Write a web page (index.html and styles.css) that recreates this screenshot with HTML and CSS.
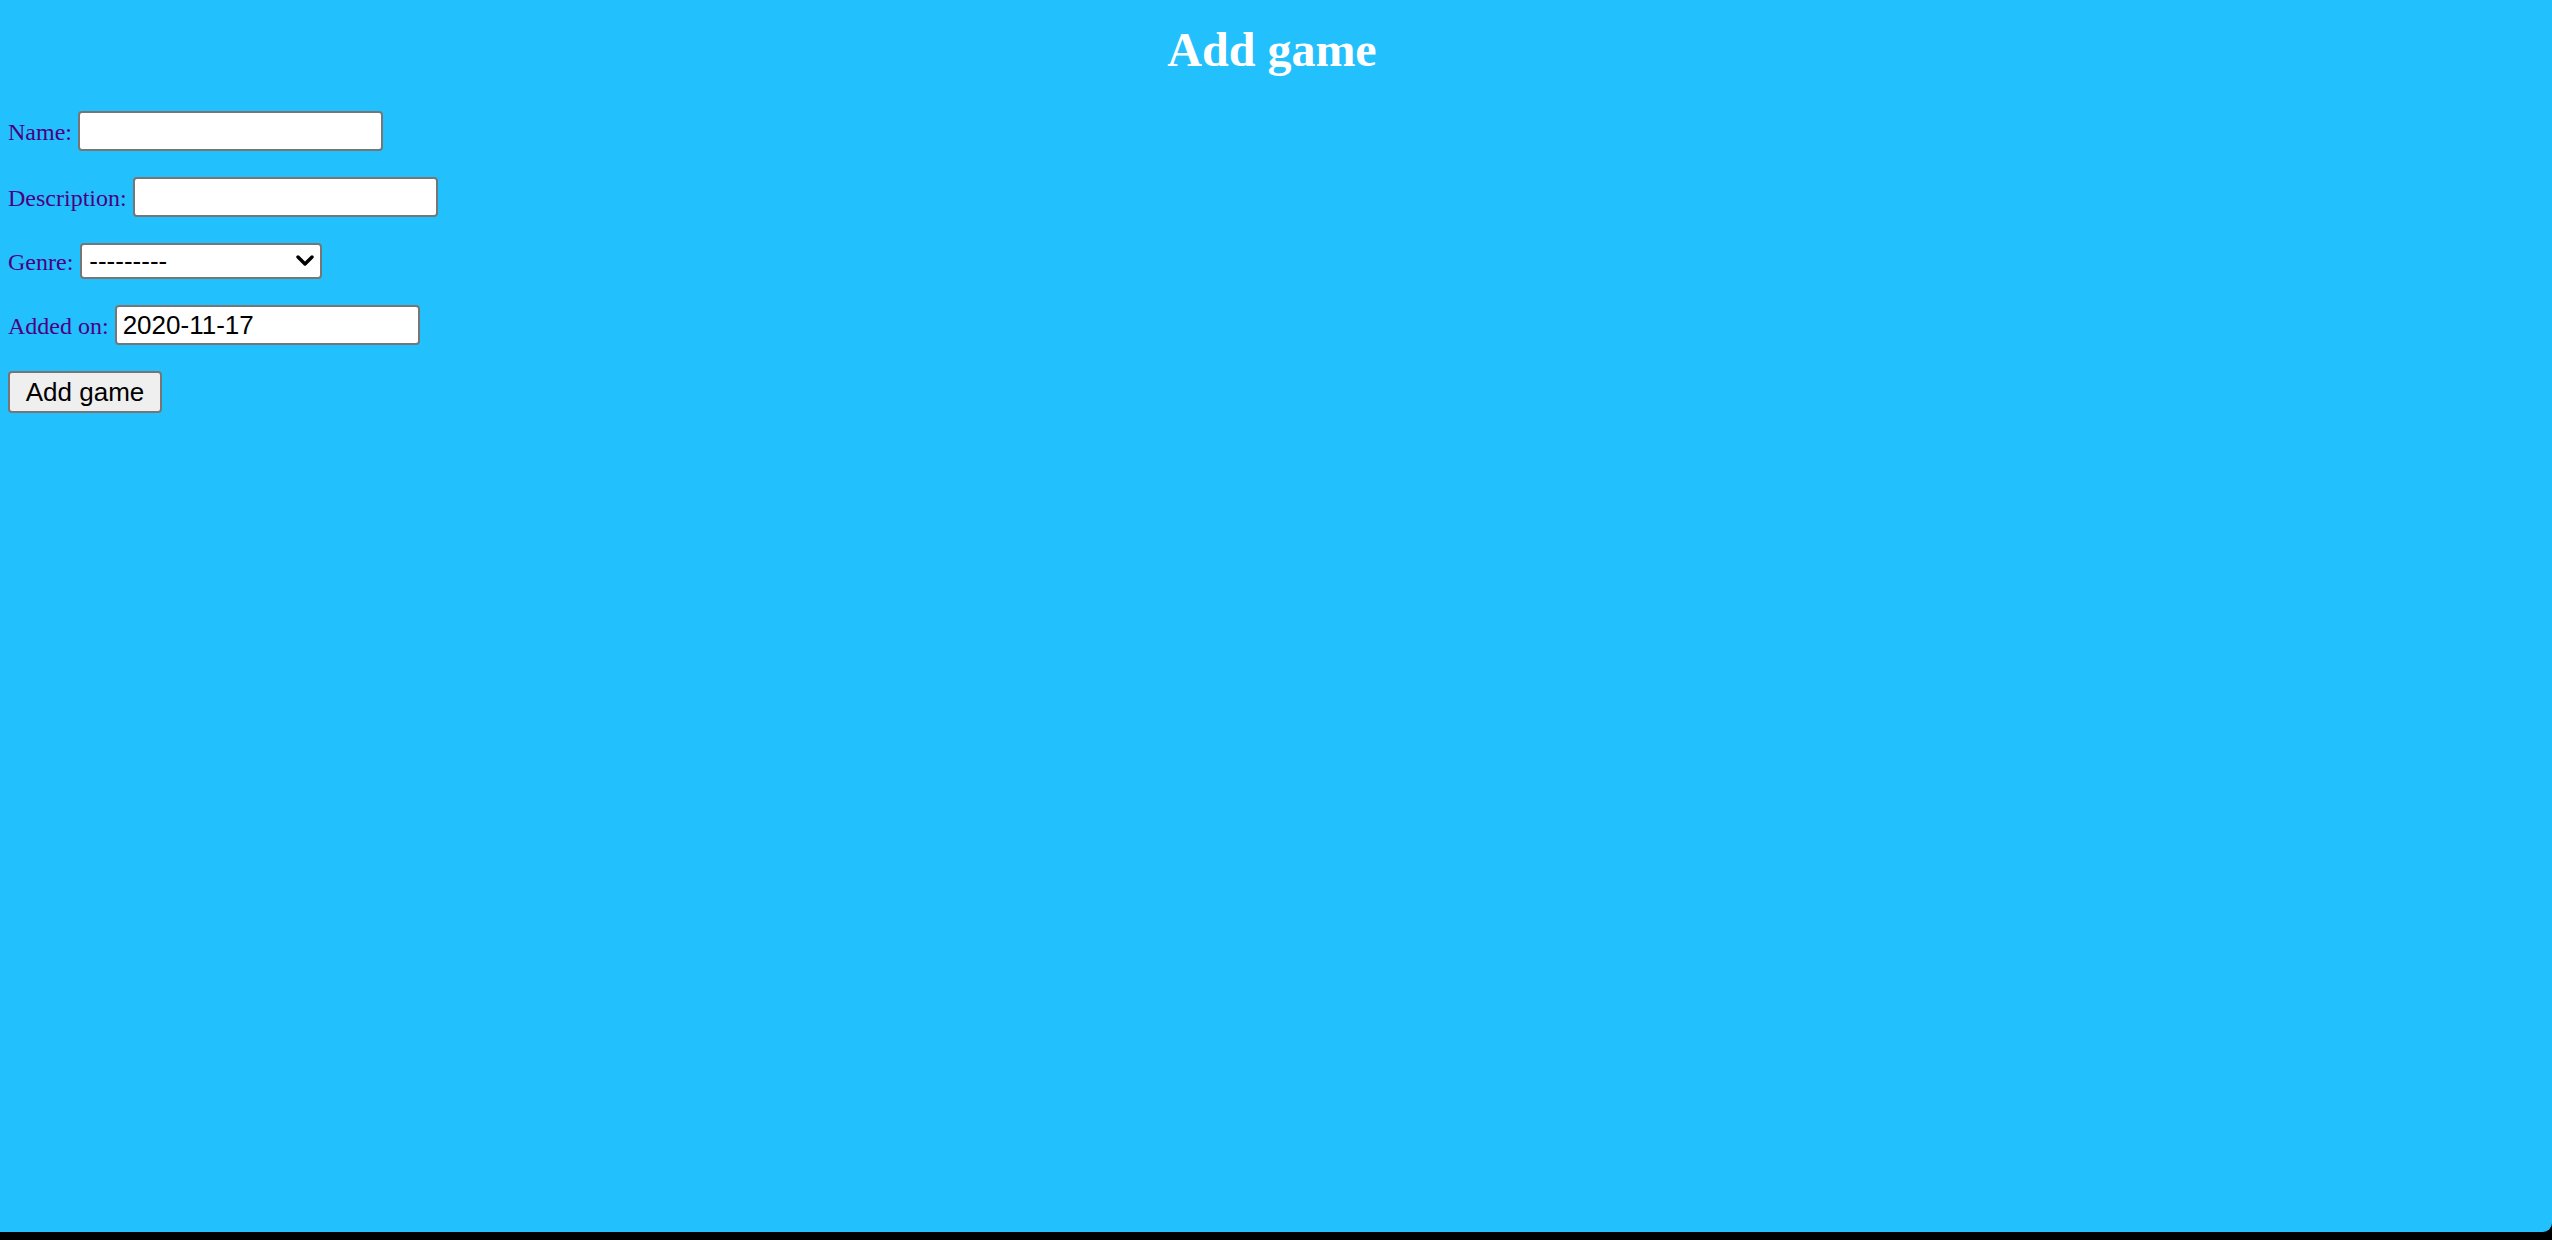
FILE: index.html
```html
<!DOCTYPE html>
<html lang="en">
<head>
<meta charset="utf-8">
<title>Add game</title>
<link rel="stylesheet" href="styles.css">
</head>
<body>
<div class="window">
  <h1 class="title">Add game</h1>
  <form class="form">
    <div class="row"><label class="label" for="name">Name:</label> <input class="field" id="name" type="text"></div>
    <div class="row"><label class="label" for="desc">Description:</label> <input class="field" id="desc" type="text"></div>
    <div class="row"><label class="label" for="genre">Genre:</label> <span class="select-wrap"><select class="select" id="genre"><option>---------</option></select><svg class="chevron" width="18" height="12" viewBox="0 0 18 12"><path d="M2 2 L9 9 L16 2" fill="none" stroke="#000" stroke-width="3.4" stroke-linecap="round" stroke-linejoin="round"/></svg></span></div>
    <div class="row"><label class="label" for="added">Added on:</label> <input class="field" id="added" type="text" value="2020-11-17"></div>
    <div class="row"><button class="button" type="button">Add game</button></div>
  </form>
</div>
</body>
</html>
```

FILE: styles.css
```css
html, body {
  margin: 0;
  padding: 0;
}
body {
  background: #000;
  width: 2552px;
  height: 1240px;
  overflow: hidden;
}
.window {
  background: #22c0fd;
  height: 1232px;
  box-sizing: border-box;
  padding: 23px 16px 0 8px;
  border-bottom-right-radius: 9px;
  font-family: "Liberation Serif", "Times New Roman", serif;
}
.title {
  margin: 0 0 35px 0;
  font-size: 48px;
  font-weight: bold;
  color: #fff;
  text-align: center;
  line-height: 53px;
}
.form {
  margin: 0;
}
.row {
  margin: 0 0 26px 0;
  font-size: 24px;
  color: #4b0082;
  line-height: 26px;
}
.label {
  color: #4b0082;
}
.field {
  box-sizing: border-box;
  width: 305px;
  height: 40px;
  padding: 1px 6px;
  margin: 0;
  border: 2px solid #767676;
  border-radius: 4px;
  background: #fff;
  font-family: "Liberation Sans", Arial, sans-serif;
  font-size: 26px;
  color: #000;
  vertical-align: baseline;
}
.select-wrap {
  position: relative;
  display: inline-block;
}
.select {
  appearance: none;
  -webkit-appearance: none;
  box-sizing: border-box;
  width: 242px;
  height: 36px;
  padding: 0 30px 0 7px;
  margin: 0 0 0 1px;
  border: 2px solid #767676;
  border-radius: 4px;
  background: #fff;
  font-family: "Liberation Sans", Arial, sans-serif;
  font-size: 26px;
  color: #000;
}
.chevron {
  position: absolute;
  right: 8px;
  top: 12px;
  pointer-events: none;
}
.button {
  box-sizing: border-box;
  width: 154px;
  height: 42px;
  padding: 0 15px;
  margin: 0;
  border: 2px solid #767676;
  border-radius: 4px;
  background: #efefef;
  font-family: "Liberation Sans", Arial, sans-serif;
  font-size: 26px;
  color: #000;
}
```
